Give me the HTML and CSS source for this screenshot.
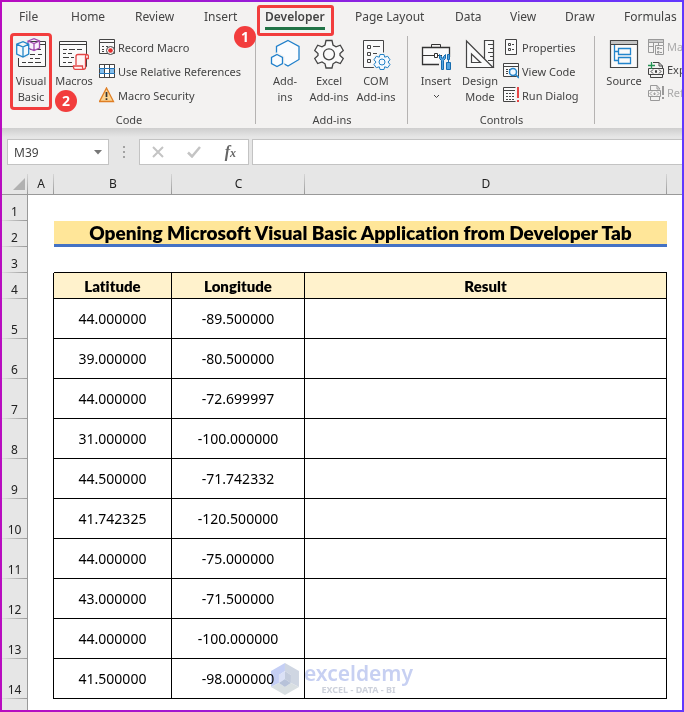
FILE: index.html
```html
<!DOCTYPE html>
<html lang="en">
<head>
<meta charset="utf-8">
<meta name="viewport" content="width=device-width, initial-scale=1">
<title>Developer Tab</title>
<link rel="stylesheet" href="styles.css">
</head>
<body>
<div class="frame">
  <header class="ribbon">
    <nav class="tabs" aria-label="Ribbon tabs">
      <a href="#">File</a><a href="#">Home</a><a href="#">Review</a><a href="#">Insert</a>
      <a href="#" class="active">Developer<span class="badge badge-tab">1</span></a>
      <a href="#">Page Layout</a><a href="#">Data</a><a href="#">View</a><a href="#">Draw</a><a href="#">Formulas</a>
    </nav>
    <div class="groups">
      <section class="group group-code">
        <div class="tools">
          <button class="large callout">
            <svg width="30" height="32" viewBox="0 0 30 32" fill="none" stroke="#3b3b3b">
              <path fill="#fafafa" d="M2.5 3.500H29.500V28.500H2.500Z"/>
              <path d="M20 6.500H29M14 11.500H18M21 11.500H25M14 16.500H19M22 16.500H26M14 20.500H17M19 20.500H24M6 24.500H10M12 24.500H17M19 24.500H25"/>
              <path stroke="none" fill="#f3f2f1" d="M0 0H12V20H0Z"/>
              <path stroke="#a34ab0" fill="#f8eefa" stroke-width="1.300" d="M12 3 18 .700 23.500 3V10L18 12.500 12 10ZM12 3 18 5.500 23.500 3M18 5.500V12.500"/>
              <path stroke="#2486c8" fill="#f2f9fd" stroke-width="1.300" d="M.700 6.200 7 3.700 12.700 6.200V16L7 19 .700 16ZM.700 6.200 7 9 12.700 6.200M7 9V19"/>
            </svg>
            <span>Visual<br>Basic</span>
          </button>
          <button class="large macros">
            <svg width="30" height="32" viewBox="0 0 30 32" fill="none" stroke="#3b3b3b">
              <path fill="#fafafa" d="M.500 3.500H27.500V28.500H.500ZM.500 6.500H27.500"/>
              <path d="M4 11.500H8M10 11.500H16M18 11.500H23M4 15.500H7M9 15.500H13M4 19.500H10M12 19.500H15M4 24.500H7M9 24.500H13"/>
              <path stroke="#e34545" fill="#fff4f4" stroke-width="1.300" d="M17 27V18.500Q17 16.500 19 16.500H27.500Q29.500 16.500 29.500 18.500V20.500H26.500V29.500Q26.500 31.300 24.500 31.300H16Q14.500 31.300 14.500 29.500V28H23.500V29.500Q23.500 31.300 25 31.300M26.500 20V18.500Q26.500 16.500 28 16.500"/>
            </svg>
            <span>Macros</span>
            <span class="badge badge-tool">2</span>
          </button>
          <div class="stack">
            <button class="small">
              <svg width="16" height="16" viewBox="0 0 16 16" fill="none" stroke="#444"><path fill="#fafafa" d="M.500.500H15.500V14.500H.500ZM.500 3.500H15.500"/><path d="M3 7.500H5M7 7.500H9M3 10.500H5M3 12.500H5"/><circle cx="11.500" cy="11.500" r="4" fill="#f6f6f6"/><circle cx="11.500" cy="11.500" r="2.300" fill="#e52d2d" stroke="none"/></svg>
              Record Macro</button>
            <button class="small">
              <svg width="16" height="16" viewBox="0 0 16 16" fill="none" stroke="#444"><path fill="#fff" d="M.500 1.500H15.500V14.500H.500Z"/><path fill="#83beec" stroke="none" d="M.500 5.500H15.500V10.500H.500Z"/><path fill="#fff" stroke="none" d="M6 6H10V10H6Z"/><path d="M5.500 1.500V14.500M10.500 1.500V14.500M.500 1.500V14.500M15.500 1.500V14.500"/><path stroke="#2576b9" d="M0 5.500H16M0 10.500H16"/></svg>
              Use Relative References</button>
            <button class="small">
              <svg width="16" height="16" viewBox="0 0 16 16"><path fill="#fbd391" stroke="#df7e24" stroke-width="1.300" d="M7.500 1 14.500 14.500H.500Z"/><path stroke="#333" stroke-width="1.700" d="M7.500 5V10M7.500 11.300V13"/></svg>
              Macro Security</button>
          </div>
        </div>
        <h2>Code</h2>
      </section>
      <section class="group group-addins">
        <div class="tools">
          <button class="large">
            <svg width="30" height="32" viewBox="0 0 30 32" fill="#fafcfe" stroke="#2080cb" stroke-width="1.300"><path d="M18 2.500 29 8.500V21.500L18 28 6.500 21.500V8.500Z"/><path stroke="#f3f2f1" stroke-width="4" d="M7 16.500 12.500 19.500V25.500L7 28.500 1.500 25.500V19.500Z"/><path d="M7 16.500 12.500 19.500V25.500L7 28.500 1.500 25.500V19.500Z"/></svg>
            <span>Add-<br>ins</span>
          </button>
          <button class="large">
            <svg width="30" height="32" viewBox="0 0 30 32" fill="#fafafa" stroke="#444" stroke-width="1.300"><path d="M12 2.500H18L19 7 22 8.800 26.300 7.200 29.300 12.500 26 15.500 26 17.500 29.300 20.500 26.300 25.500 22 24 19 25.800 18 30H12L11 25.800 8 24 3.700 25.500.700 20.500 4 17.500 4 15.500.700 12.500 3.700 7.200 8 8.800 11 7Z"/><circle cx="15" cy="16.300" r="5.500"/></svg>
            <span>Excel<br>Add-ins</span>
          </button>
          <button class="large com">
            <svg width="30" height="32" viewBox="0 0 30 32" fill="none" stroke="#444"><path fill="#fafafa" d="M2.500 2.500H22.500V29.500H2.500Z"/><path d="M6.500 7.500H9.500V10.500H6.500ZM6.500 14.500H9.500V17.500H6.500ZM6.500 21.500H9.500V24.500H6.500ZM12 8.500H19M12 15.500H16"/><path stroke="#f3f2f1" stroke-width="3" fill="#f3f2f1" d="M19 16H23L24 19 27 18 29 22 27 24 29 27 27 30 24 29 23 31H19L18 29 15 30 13 27 15 24 13 22 15 18 18 19Z"/><path stroke="#2583c7" fill="#f4faff" d="M19 16.500H23L23.700 19.200 26.700 18.300 29 21.800 27 24 29 26.500 26.700 29.700 23.700 28.800 23 31.500H19L18.300 28.800 15.300 29.700 13 26.500 15 24 13 21.800 15.300 18.300 18.300 19.200Z"/><circle cx="21" cy="24" r="3" stroke="#2583c7"/></svg>
            <span>COM<br>Add-ins</span>
          </button>
        </div>
        <h2>Add-ins</h2>
      </section>
      <section class="group group-controls">
        <div class="tools">
          <button class="large">
            <svg width="30" height="32" viewBox="0 0 30 32" fill="none" stroke="#333"><path fill="#fafafa" stroke-width="1.300" d="M1.500 9.500H28.500V26.500H1.500Z"/><path d="M10.500 9V6.500H19.500V9M2 17.500H13M17 17.500H21"/><path fill="#fff" d="M13.500 15.500H16.500V19.500H13.500Z"/><path stroke="#f3f2f1" stroke-width="6" d="M21 19V32M27 19V32"/><path fill="#55a4df" stroke="#176cae" d="M18.500 16.500V20.500L20.500 22.500V31.500H22.500V22.500L24.500 20.500V16.500L22.500 18.500V20H20.500V18.500ZM26.500 16.500H28.500V21.500H26.500ZM25.500 24.500H29.500V31.500H25.500ZM27.500 21V24"/></svg>
            <span>Insert</span>
            <svg class="chevron" width="7" height="5" viewBox="0 0 7 5" fill="none" stroke="#444"><path d="M1 1 3.500 3.500 6 1"/></svg>
          </button>
          <button class="large">
            <svg width="30" height="32" viewBox="0 0 30 32" fill="#fafafa" stroke="#444" stroke-width="1.200"><path d="M19.500 2.500H28.500V29.500H19.500ZM23 6.500H28M25 10.500H28M23 14.500H28M25 18.500H28M23 22.500H28"/><path d="M1.500 3 28 29.500H1.500ZM6.500 16 15.500 24.500H6.500Z"/></svg>
            <span>Design<br>Mode</span>
          </button>
          <div class="stack">
            <button class="small">
              <svg width="16" height="16" viewBox="0 0 16 16" fill="none" stroke="#444"><path fill="#fafafa" d="M2.500.500H13.500V15.500H2.500Z"/><path d="M5.500 4.500H7.500V6.500H5.500ZM5.500 9.500H7.500V11.500H5.500ZM9 5.500H11M9 10.500H11"/></svg>
              Properties</button>
            <button class="small">
              <svg width="16" height="16" viewBox="0 0 16 16" fill="none" stroke="#444"><path fill="#fafafa" d="M.500.500H15.500V13.500H.500ZM.500 3.500H15.500"/><path stroke-dasharray="2 1" d="M3 6.500H7M3 8.500H6M3 10.500H7"/><circle cx="10" cy="9" r="3.500" fill="#f2f9ff" stroke="#2685ca" stroke-width="1.500"/><path stroke="#2685ca" stroke-width="1.700" d="M12.500 11.500 16 15"/></svg>
              View Code</button>
            <button class="small">
              <svg width="16" height="16" viewBox="0 0 16 16" fill="none" stroke="#444"><path fill="#fafafa" d="M12.500 14.500H.500V.500H12.500M.500 3.500H12"/><path stroke-dasharray="2 1" d="M3 6.500H11M3 9.500H11M3 12.500H11"/><path stroke="#e84747" stroke-width="2" d="M15 0V11M15 13V15"/></svg>
              Run Dialog</button>
          </div>
        </div>
        <h2>Controls</h2>
      </section>
      <section class="group group-xml">
        <div class="tools">
          <button class="large">
            <svg width="30" height="32" viewBox="0 0 30 32" fill="none" stroke="#444"><path fill="#fafafa" stroke-width="1.200" d="M1.500 2.500H28.500V29.500H1.500Z"/><path fill="#c4c4c4" d="M1.500 2.500H28.500V6.500H1.500Z"/><path stroke="#2385cc" stroke-width="1.300" d="M5.500 7V22.500H9M5.500 13.500H9M9.500 10.500H21.500V16.500H9.500ZM9.500 19.500H21.500V25.500H9.500Z"/></svg>
            <span>Source</span>
          </button>
          <div class="stack tight">
            <button class="small" disabled>
              <svg width="16" height="16" viewBox="0 0 16 16" fill="none" stroke="#999"><path d="M6 13.500H.500V.500H15.500V6"/><path fill="#ccc" d="M.500.500H15.500V3.500H.500Z"/><path d="M5.500 3V13M1 7.500H6M10.500 3V6M7.500 6.500H15.500V15.500H7.500ZM9.500 8.500H11V10H9.500ZM9.500 12.500H11V14H9.500ZM12 9.500H14M12 13.500H14"/></svg>
              Map Properties</button>
            <button class="small">
              <svg width="16" height="16" viewBox="0 0 16 16" fill="none" stroke="#444"><path d="M5 .500H11L14.500 4V6M11 .500V4H14.500M2.500 12V15.500H14.500V12M.500 6.500H15.500V12.500H.500Z"/><path d="M5 7.500 3 9.500 5 11.500M11 7.500 13 9.500 11 11.500M7.500 8.500H8.500V10.500H7.500Z"/><path stroke="#249354" stroke-width="1.300" d="M3.500 0V7M0 3.500H7"/></svg>
              Expansion Packs</button>
            <button class="small" disabled>
              <svg width="16" height="16" viewBox="0 0 16 16" fill="none" stroke="#999"><path d="M2.500 5V.500H9L12 4M9 .500V4H12M2.500 12V15.500H11.500V12M.500 5.500H12.500V11.500H.500Z"/><path d="M4 6.500 2 8.500 4 10.500M9 6.500 11 8.500 9 10.500M6 8H7V9.500H6Z"/><path stroke-width="2" d="M15 1V10M15 12V14"/></svg>
              Refresh Data</button>
          </div>
        </div>
      </section>
    </div>
  </header>

  <div class="formula-bar">
    <div class="name-box">
      <input type="text" value="M39" aria-label="Name box">
      <button aria-label="Open name list"><svg width="8" height="5" viewBox="0 0 8 5"><path fill="#777" d="M0 0H8L4 4.500Z"/></svg></button>
    </div>
    <svg class="dots" width="2" height="12" viewBox="0 0 2 12" fill="#a2a2a2"><path d="M0 0H2V2H0ZM0 5H2V7H0ZM0 10H2V12H0Z"/></svg>
    <div class="entry-buttons">
      <button aria-label="Cancel"><svg width="12" height="12" viewBox="0 0 12 12" fill="none" stroke="#c4c4c4" stroke-width="2"><path d="M1 1 11 11M11 1 1 11"/></svg></button>
      <button aria-label="Enter"><svg width="14" height="12" viewBox="0 0 14 12" fill="none" stroke="#c4c4c4" stroke-width="2.500"><path d="M1 6.500 5 10.500 13 1"/></svg></button>
      <button class="fx" aria-label="Insert function">f<small>x</small></button>
    </div>
    <input class="formula" type="text" aria-label="Formula">
  </div>

  <main class="sheet">
    <table>
      <colgroup><col class="c-row"><col class="c-a"><col class="c-b"><col class="c-c"><col class="c-d"><col class="c-e"></colgroup>
      <thead>
        <tr><th><svg class="corner" width="12" height="12" viewBox="0 0 12 12"><path fill="#b1b1b1" d="M12 0V12H0Z"/></svg></th><th>A</th><th>B</th><th>C</th><th>D</th><th></th></tr>
      </thead>
      <tbody>
        <tr><th>1</th><td></td><td></td><td></td><td></td><td></td></tr>
        <tr><th>2</th><td></td><td class="title" colspan="3">Opening Microsoft Visual Basic Application from Developer Tab</td><td></td></tr>
        <tr class="above-data"><th>3</th><td></td><td></td><td></td><td></td><td></td></tr>
        <tr class="data head"><th>4</th><td></td><td>Latitude</td><td>Longitude</td><td>Result</td><td></td></tr>
        <tr class="data"><th>5</th><td></td><td>44.000000</td><td>-89.500000</td><td></td><td></td></tr>
        <tr class="data"><th>6</th><td></td><td>39.000000</td><td>-80.500000</td><td></td><td></td></tr>
        <tr class="data"><th>7</th><td></td><td>44.000000</td><td>-72.699997</td><td></td><td></td></tr>
        <tr class="data"><th>8</th><td></td><td>31.000000</td><td>-100.000000</td><td></td><td></td></tr>
        <tr class="data"><th>9</th><td></td><td>44.500000</td><td>-71.742332</td><td></td><td></td></tr>
        <tr class="data"><th>10</th><td></td><td>41.742325</td><td>-120.500000</td><td></td><td></td></tr>
        <tr class="data"><th>11</th><td></td><td>44.000000</td><td>-75.000000</td><td></td><td></td></tr>
        <tr class="data"><th>12</th><td></td><td>43.000000</td><td>-71.500000</td><td></td><td></td></tr>
        <tr class="data"><th>13</th><td></td><td>44.000000</td><td>-100.000000</td><td></td><td></td></tr>
        <tr class="data"><th>14</th><td></td><td>41.500000</td><td>-98.000000</td><td></td><td></td></tr>
        <tr class="last"><th></th><td></td><td></td><td></td><td></td><td></td></tr>
      </tbody>
    </table>
    <div class="watermark">
      <svg width="28" height="32" viewBox="0 0 28 32"><path fill="#c5cff5" d="M14 0 0 8V24L8 20V12L14 8Z"/><path fill="#cfd6e2" d="M14 0 28 8V24L20 20V12L14 8Z"/><path fill="#d9dfe2" d="M0 24 14 32 28 24 20 20 14 24 8 20Z"/><path fill="#c3cbdc" d="M14 8 20 12V20L14 16Z"/><path fill="#dbe1f6" d="M14 8 8 12V20L14 16Z"/><path fill="#b7c2d9" d="M8 20 14 16 20 20 14 24Z"/></svg>
      <div><strong>exceldemy</strong><span>EXCEL - DATA - BI</span></div>
    </div>
  </main>
</div>
</body>
</html>
```
FILE: styles.css
```css
* { box-sizing: border-box; }
body { margin: 0; font-family: "Noto Sans", sans-serif; font-size: 11px; color: #444; }
button, input { font: inherit; color: inherit; border: 0; background: none; padding: 0; margin: 0; }
.frame { min-height: 100vh; padding: 2px; background: linear-gradient(90deg, #b80cc0, #6138ff); overflow: hidden; }

/* Ribbon */
.ribbon { background: #f3f2f1; overflow: hidden; }
.tabs { display: grid; grid-template-columns: 52px 64px 69px 61px 90px 100px 55px 55px 59px auto; justify-items: start; padding: 6px 0 0 17px; height: 34px; }
.tabs a { position: relative; height: 22px; padding-bottom: 1px; font-size: 12px; line-height: 18px; color: #444; text-decoration: none; white-space: nowrap; }
.tabs .active { font-weight: 600; border-bottom: 3px solid #217346; }
.tabs .active::before { content: ""; position: absolute; inset: -3px -9px -9px -8px; border: 3px solid #f23d3d; border-radius: 3px; }
.badge { position: absolute; width: 22px; height: 22px; border-radius: 50%; background: #f23d3d; color: #fff; font-size: 14px; font-weight: 700; line-height: 22px; text-align: center; }
.badge-tab { left: -31px; top: 18px; }
.badge-tool { left: 2px; top: 54px; }
.groups { display: flex; height: 92px; }
.group { display: flex; flex-direction: column; flex: none; background: linear-gradient(#b5b3b2, #b5b3b2) right top / 1px 88px no-repeat; }
.group h2 { margin: 0; font-size: 11px; font-weight: 400; line-height: 16px; text-align: center; }
.tools { display: flex; flex: 1; align-items: flex-start; }
.large { position: relative; display: flex; flex-direction: column; align-items: center; width: 44px; height: 71px; padding-top: 2px; line-height: 16px; white-space: nowrap; }
.large svg { flex: none; margin-bottom: 3px; }
.large .chevron { margin-top: 5px; }
.stack { margin-top: -1px; }
.small { display: flex; align-items: center; gap: 3px; height: 24px; white-space: nowrap; }
.small svg { flex: none; }
.small:disabled { color: #aaa; }
.tight .small { height: 23px; }
.callout { width: 36px; outline: 3px solid #f23d3d; border-radius: 1px; }
.macros { width: 42px; }
.com { width: 50px; }
.group-code { width: 254px; }
.group-code .tools { gap: 4px; padding-left: 11px; }
.group-addins { width: 152px; }
.group-addins .tools { padding-left: 7px; }
.group-controls { width: 187px; }
.group-controls .tools { padding-left: 6px; }
.group-controls .stack { margin-left: 1px; }
.group-xml { flex: 1 0 0; background: none; }
.group-xml .tools { padding-left: 7px; }
.group-xml .stack { margin-left: 2px; }

/* Formula bar */
.formula-bar { display: flex; height: 40px; padding: 11px 0 3px 5px; background: linear-gradient(#cecece, #e6e6e6 9px); font-size: 12px; }
.name-box, .entry-buttons, .formula { display: flex; align-items: center; border: 1px solid #c3c3c3; background: #fff; }
.name-box { width: 102px; padding: 0 6px; }
.name-box input { flex: 1; min-width: 0; }
.name-box button { display: flex; }
.dots { align-self: center; margin: 0 14px; }
.entry-buttons { width: 110px; justify-content: space-between; padding: 0 12px; }
.entry-buttons button { display: flex; }
.entry-buttons .fx { font: italic 700 16px/20px "Liberation Serif", serif; color: #666; align-items: baseline; }
.fx small { font-size: 12px; }
.formula { flex: 1; min-width: 0; margin-left: 3px; border-right: 0; }

/* Worksheet */
.sheet { position: relative; background: #fff; }
table { width: 100%; table-layout: fixed; border-spacing: 0; color: #000; font-size: 14px; }
.c-row, .c-a { width: 26px; }
.c-b { width: 118px; }
.c-c { width: 133px; }
.c-e { width: 15px; }
th, td { height: 26px; padding: 0; text-align: center; line-height: 18px; }
th { font-weight: 400; color: #222; font-size: 12px; }
thead th { height: 27px; padding-top: 6px; border-bottom: 1px solid #999; background: linear-gradient(#d5d5d5, #999) right bottom / 1px 20px no-repeat #e6e6e6; }
thead th:last-child { background: #e6e6e6; }
.corner { display: block; margin: 0 3px 0 auto; }
tbody th { border-right: 1px solid #999; vertical-align: bottom; background: linear-gradient(90deg, #ddd, #999) left bottom / 100% 1px no-repeat #e6e6e6; }
.title { background: #ffe699; border-bottom: 3px solid #4472c4; font-family: Lato, sans-serif; font-size: 19px; line-height: 22px; font-weight: 800; font-variant-ligatures: none; white-space: nowrap; }
.data td { height: 40px; border-bottom: 1px solid #000; border-right: 1px solid #000; }
.data td:nth-child(2) { border-bottom: 0; }
.data td:last-child { border: 0; }
.data.head td { height: 26px; font-family: Lato, sans-serif; font-size: 15px; font-weight: 800; font-variant-ligatures: none; }
.head td:nth-child(n+3):nth-child(-n+5) { background: #fff2cc; }
.above-data td:nth-child(n+3):nth-child(-n+5) { border-bottom: 1px solid #000; }
.last th, .last td { height: 11px; }
.last th { background: #e6e6e6; }
.watermark { position: absolute; left: 50%; bottom: 14px; transform: translateX(-50%); display: flex; align-items: center; gap: 5px; mix-blend-mode: multiply; pointer-events: none; }
.watermark strong { display: block; font-size: 21px; font-weight: 600; line-height: 22px; color: #c7d0f2; }
.watermark span { display: block; font-size: 9px; line-height: 12px; font-weight: 700; text-align: center; color: #cdd1db; }
```
